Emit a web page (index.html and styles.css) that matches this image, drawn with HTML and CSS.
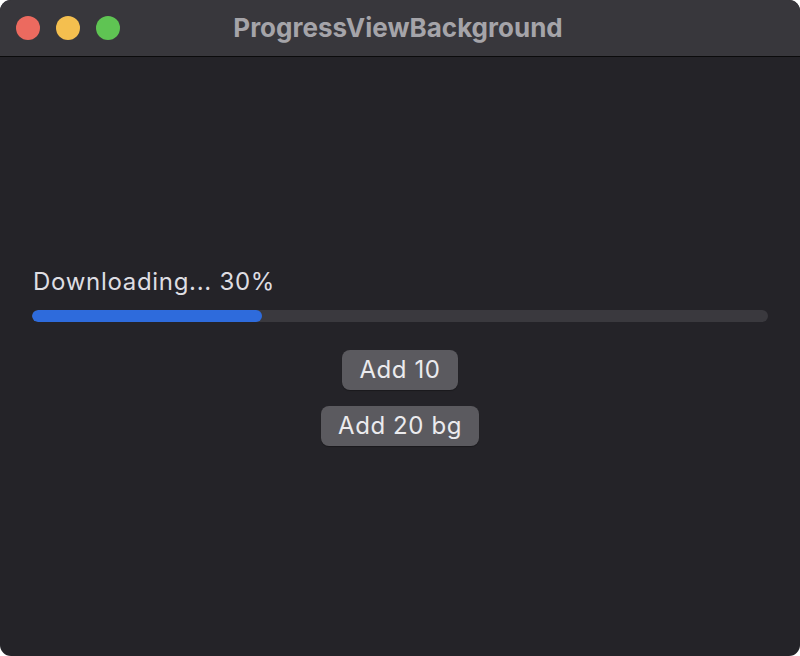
FILE: index.html
```html
<!DOCTYPE html>
<html>
<head>
<meta charset="utf-8">
<link rel="stylesheet" href="styles.css">
</head>
<body>
<div class="window">
  <div class="titlebar">
    <div class="lights">
      <span class="light red"></span>
      <span class="light yellow"></span>
      <span class="light green"></span>
    </div>
    <div class="title">ProgressViewBackground</div>
  </div>
  <div class="content">
    <div class="label">Downloading... 30%</div>
    <div class="track"><div class="fill" style="width:31.3%"></div></div>
    <div class="buttons">
      <button class="btn">Add 10</button>
      <button class="btn">Add 20 bg</button>
    </div>
  </div>
</div>
</body>
</html>
```
FILE: styles.css
```css
html, body {
  margin: 0;
  padding: 0;
  background: #ffffff;
}
.window {
  width: 800px;
  height: 656px;
  border-radius: 11px;
  overflow: hidden;
  background: #242328;
  display: flex;
  flex-direction: column;
  font-family: Inter, "Noto Sans", sans-serif;
}
.titlebar {
  height: 56px;
  flex: none;
  background: #38373c;
  border-bottom: 1px solid #0b0b0c;
  position: relative;
  display: flex;
  align-items: center;
  justify-content: center;
}
.lights {
  position: absolute;
  left: 16px;
  top: 16px;
  display: flex;
  gap: 16px;
}
.light {
  width: 24px;
  height: 24px;
  border-radius: 50%;
  display: block;
}
.red { background: #ec6a5f; }
.yellow { background: #f4bf4f; }
.green { background: #5fc453; }
.title {
  color: #a5a4a9;
  font-weight: 700;
  font-size: 26px;
  margin-left: -4px;
  margin-top: -2px;
}
.content {
  flex: 1;
  display: flex;
  flex-direction: column;
  justify-content: center;
  padding: 0 32px;
}
.label {
  color: #dedde2;
  font-size: 24px;
  letter-spacing: 0.7px;
  line-height: 28px;
  padding-left: 1px;
}
.track {
  margin-top: 14px;
  height: 12px;
  border-radius: 6px;
  background: #3a393e;
  overflow: hidden;
}
.fill {
  height: 100%;
  border-radius: 6px;
  background: #2e6bdc;
}
.buttons {
  margin-top: 28px;
  display: flex;
  flex-direction: column;
  align-items: center;
  gap: 16px;
}
.btn {
  height: 40px;
  padding: 0 17px;
  border: none;
  border-radius: 8px;
  background: #5b5a5f;
  color: #ebebee;
  font-family: Inter, "Noto Sans", sans-serif;
  font-size: 24px;
  letter-spacing: 0.6px;
  line-height: 40px;
  box-shadow: 0 1px 1px rgba(0,0,0,0.3);
}
```
